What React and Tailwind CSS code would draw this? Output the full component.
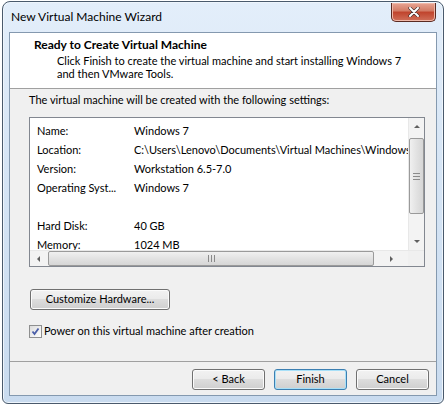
import React from "react";

const F = { fontFamily: 'Lato, "Noto Sans", sans-serif' };

function Btn({ children, w, def }) {
  return (
    <div
      className={`h-[21px] ${w} rounded-[3px] border ${def ? "border-[#3c7fb1] shadow-[inset_0_0_0_1px_#a8e0f8]" : "border-[#707070] shadow-[inset_0_0_0_1px_#fbfbfb]"} bg-[linear-gradient(#f2f2f2_0%,#ebebeb_45%,#dddddd_50%,#cfcfcf_100%)] flex items-center justify-center text-[11px] text-black`}
    >
      {children}
    </div>
  );
}

function Arrow({ dir }) {
  const p = {
    up: "M1 5 L4 2 L7 5 Z",
    down: "M1 2 L4 5 L7 2 Z",
    left: "M5 1 L2 4 L5 7 Z",
    right: "M3 1 L6 4 L3 7 Z",
  }[dir];
  return (
    <svg width="8" height="8" viewBox="0 0 8 8">
      <path d={p} fill="#606060" />
    </svg>
  );
}

export default function App() {
  const rows = [
    ["Name:", "Windows 7"],
    ["Location:", "C:\\Users\\Lenovo\\Documents\\Virtual Machines\\Windows 7"],
    ["Version:", "Workstation 6.5-7.0"],
    ["Operating Syst...", "Windows 7"],
    ["", ""],
    ["Hard Disk:", "40 GB"],
    ["Memory:", "1024 MB"],
  ];
  return (
    <div className="w-[446px] h-[405px] bg-white pt-[1px] pl-[2px]" style={F}>
      <div className="w-[442px] h-[403px] rounded-t-[8px] rounded-b-[6px] border border-[#4a5a6c] bg-[linear-gradient(180deg,#e3eefa_0%,#d6e5f5_40%,#c9dbef_100%)] flex flex-col shadow-[inset_0_0_0_1px_#eef5fc]">
        <div className="h-[30px] flex items-start justify-between pl-[8px] pr-[7px]">
          <div className="pt-[7px] text-[12px] text-black leading-[16px]">New Virtual Machine Wizard</div>
          <div className="mt-[1px] w-[45px] h-[19px] rounded-b-[5px] border border-[#5a2a22] border-t-0 bg-[linear-gradient(#e8a493_0%,#d27a64_45%,#c0432c_50%,#d0705a_100%)] flex items-center justify-center shadow-[inset_0_0_0_1px_#f0b8a8]">
            <svg width="12" height="10" viewBox="0 0 12 10">
              <path d="M2 1 L10 9 M10 1 L2 9" stroke="#3b2a2a" strokeWidth="3.2" strokeLinecap="round" />
              <path d="M2 1 L10 9 M10 1 L2 9" stroke="#ffffff" strokeWidth="2" strokeLinecap="round" />
            </svg>
          </div>
        </div>
        <div className="mx-[6px] mb-[7px] flex-1 border border-[#8499af] bg-[#f0f0f0] flex flex-col">
          <div className="h-[56px] bg-white border-b border-[#a0a0a0] pl-[24px] pt-[4px]">
            <div className="text-[12px] font-bold leading-[16px] text-black">Ready to Create Virtual Machine</div>
            <div className="mt-[1px] pl-[23px] text-[11px] leading-[13px] text-black">
              Click Finish to create the virtual machine and start installing Windows 7
              <br />
              and then VMware Tools.
            </div>
          </div>
          <div className="flex-1 flex flex-col px-[19px] pt-[3px]">
            <div className="text-[11px] leading-[16px] text-black">
              The virtual machine will be created with the following settings:
            </div>
            <div className="mt-[9px] w-[396px] h-[150px] border border-[#828790] bg-white flex flex-col">
              <div className="flex flex-1 min-h-0">
                <div className="flex-1 min-w-0 overflow-hidden pl-[7px] pt-[4px]">
                  {rows.map(([a, b], i) => (
                    <div key={i} className="h-[19px] shrink-0 flex items-center text-[11px] text-black whitespace-nowrap">
                      <div className="w-[97px] shrink-0">{a}</div>
                      <div>{b}</div>
                    </div>
                  ))}
                </div>
                <div className="w-[16px] shrink-0 bg-[#f3f3f3] border-l border-[#e8e8e8] flex flex-col items-center">
                  <div className="h-[17px] flex items-center justify-center">
                    <Arrow dir="up" />
                  </div>
                  <div className="mt-[3px] w-[15px] h-[76px] rounded-[2px] border border-[#9a9a9a] bg-[linear-gradient(90deg,#f0f0f0,#e2e2e2_50%,#d6d6d6)] flex flex-col items-center justify-center gap-[2px]">
                    <div className="w-[7px] h-[1px] bg-[#8a8a8a]" />
                    <div className="w-[7px] h-[1px] bg-[#8a8a8a]" />
                    <div className="w-[7px] h-[1px] bg-[#8a8a8a]" />
                  </div>
                  <div className="flex-1" />
                  <div className="h-[17px] flex items-center justify-center">
                    <Arrow dir="down" />
                  </div>
                </div>
              </div>
              <div className="h-[16px] shrink-0 flex bg-[#f3f3f3] border-t border-[#e8e8e8]">
                <div className="w-[17px] flex items-center justify-center">
                  <Arrow dir="left" />
                </div>
                <div className="ml-[1px] w-[326px] h-[15px] rounded-[2px] border border-[#9a9a9a] bg-[linear-gradient(180deg,#f0f0f0,#e2e2e2_50%,#d6d6d6)] flex items-center justify-center gap-[2px]">
                  <div className="w-[1px] h-[7px] bg-[#8a8a8a]" />
                  <div className="w-[1px] h-[7px] bg-[#8a8a8a]" />
                  <div className="w-[1px] h-[7px] bg-[#8a8a8a]" />
                </div>
                <div className="flex-1 flex items-center justify-center">
                  <Arrow dir="right" />
                </div>
                <div className="w-[16px] bg-[#f0f0f0]" />
              </div>
            </div>
            <div className="mt-[22px] ml-[1px]">
              <Btn w="w-[140px]">Customize Hardware...</Btn>
            </div>
            <div className="mt-[13px] flex items-center gap-[2px] text-[11px] text-black">
              <div className="w-[13px] h-[13px] border border-[#8e8f8f] bg-[linear-gradient(135deg,#dcdcdc,#fefefe)] flex items-center justify-center">
                <svg width="9" height="9" viewBox="0 0 9 9">
                  <path d="M1.5 4.5 L3.5 7 L7.5 1.5" fill="none" stroke="#4a5ea8" strokeWidth="1.8" />
                </svg>
              </div>
              <span className="leading-[16px]">Power on this virtual machine after creation</span>
            </div>
            <div className="flex-1" />
          </div>
          <div className="h-[34px] border-t border-[#a0a0a0] flex items-start justify-end gap-[9px] pt-[7px] pr-[7px]">
            <Btn w="w-[73px]">&lt; Back</Btn>
            <Btn w="w-[73px]" def>Finish</Btn>
            <Btn w="w-[73px]">Cancel</Btn>
          </div>
        </div>
      </div>
    </div>
  );
}
